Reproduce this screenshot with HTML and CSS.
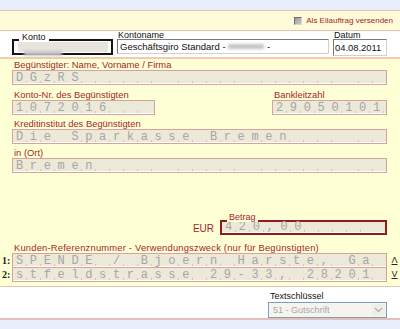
FILE: index.html
```html
<!DOCTYPE html>
<html lang="de">
<head>
    <meta charset="UTF-8">
    <meta name="viewport" content="width=device-width, initial-scale=1.0">
    <title>Überweisung</title>

    <link rel="stylesheet" href="styles.css">
</head>
<body>

    <div class="strip"></div>

    <!-- Eilauftrag -->
    <div class="eil">
        <span class="check"></span>
        <span class="eil-text">Als Eilauftrag versenden</span>
    </div>

    <!-- Auftraggeber -->
    <div class="account">
        <div class="konto">
            <span class="konto-label">Konto</span>
            <div class="konto-field"><span class="blur blur-konto"></span></div>
        </div>
        <div class="kname">
            <div class="plain-label">Kontoname</div>
            <div class="plain-input">Geschäftsgiro Standard - <span class="blur blur-name"></span> -</div>
        </div>
        <div class="datum">
            <div class="plain-label">Datum</div>
            <div class="plain-input date-input">04.08.2011</div>
        </div>
    </div>

    <!-- Formular -->
    <div class="main">
        <div class="lbl">Begünstigter: Name, Vorname / Firma</div>
        <div class="comb">DGzRS</div>

        <div class="pair">
            <div class="konto-nr">
                <div class="lbl">Konto-Nr. des Begünstigten</div>
                <div class="comb">1072016</div>
            </div>
            <div class="blz">
                <div class="lbl">Bankleitzahl</div>
                <div class="comb">29050101</div>
            </div>
        </div>

        <div class="lbl spaced">Kreditinstitut des Begünstigten</div>
        <div class="comb">Die Sparkasse Bremen</div>

        <div class="lbl spaced">in (Ort)</div>
        <div class="comb">Bremen</div>

        <div class="betrag-row">
            <span class="eur">EUR</span>
            <div class="betrag">
                <span class="betrag-label">Betrag</span>
                <div class="comb comb-bare">420,00</div>
            </div>
        </div>

        <div class="lbl kunden">Kunden-Referenznummer - Verwendungszweck (nur für Begünstigten)</div>
        <div class="ref-row">
            <span class="num">1:</span>
            <div class="comb">SPENDE / Bjoern Harste, Ga</div>
            <span class="scroll">Λ</span>
        </div>
        <div class="ref-row second">
            <span class="num">2:</span>
            <div class="comb">stfeldstrasse 29-33, 28201</div>
            <span class="scroll">V</span>
        </div>
    </div>

    <!-- Textschlüssel -->
    <div class="footer">
        <div class="ts-label">Textschlüssel</div>
        <div class="select">
            <span class="select-text">51 - Gutschrift</span>
            <span class="select-btn">
                <svg width="9" height="6" viewBox="0 0 9 6"><polyline points="1,1 4.5,4.5 8,1" fill="none" stroke="#b4b4b4" stroke-width="1.4"/></svg>
            </span>
        </div>
    </div>

    <div class="strip strip-bottom"></div>

</body>
</html>
```

FILE: styles.css
```css
body {
    margin: 0;
    width: 400px;
    height: 329px;
    overflow: hidden;
    font-family: "Liberation Sans", Arial, sans-serif;
    background-color: #ffffff;
}

.strip {
    height: 10px;
    background-color: #e8eefa;
    border-bottom: 1px solid #e6c0b6;
}

.strip-bottom {
    height: 9px;
    border-bottom: none;
}

/* Eilauftrag */
.eil {
    height: 19px;
    background-color: #fffbd9;
    border-bottom: 1px solid #e6c0b6;
    display: flex;
    justify-content: flex-end;
    align-items: center;
    gap: 4px;
    padding-right: 7px;
}

.check {
    width: 8px;
    height: 8px;
    box-sizing: border-box;
    border: 1px solid;
    border-color: #6e6e6e #d8d8d8 #d8d8d8 #6e6e6e;
    background: linear-gradient(135deg, #9c9c9c, #c8c8c8);
}

.eil-text {
    font-size: 8px;
    color: #a3262a;
}

/* Auftraggeber */
.account {
    height: 26px;
    border-bottom: 2px solid #f2cbb0;
    display: flex;
    padding-left: 12px;
}

.konto {
    margin-top: 8px;
    width: 101px;
    height: 16px;
    box-sizing: border-box;
    border: 2px solid #151515;
    position: relative;
}

.konto-label {
    position: absolute;
    top: -8px;
    left: 5px;
    padding: 0 3px;
    background-color: #ffffff;
    font-size: 9px;
    line-height: 9px;
    color: #111111;
}

.konto-field {
    margin: 1px 3px 0 4px;
    height: 10px;
    background-color: #e6e4dc;
}

.blur {
    display: inline-block;
    background-color: #c4c4c8;
    filter: blur(1.5px);
}

.blur-konto {
    width: 38px;
    height: 5px;
    margin: 3px 0 0 6px;
}

.blur-name {
    width: 36px;
    height: 5px;
    vertical-align: 1px;
}

.kname {
    margin-left: 4px;
    width: 212px;
}

.datum {
    margin-left: 4px;
    width: 54px;
}

.plain-label {
    font-size: 9px;
    line-height: 8px;
    height: 8px;
    padding-left: 1px;
    color: #111111;
}

.plain-input {
    height: 15px;
    box-sizing: border-box;
    border: 1px solid;
    border-color: #7a7a7a #d4d0c8 #d4d0c8 #7a7a7a;
    background-color: #ffffff;
    padding-left: 2px;
    font-size: 9.5px;
    line-height: 13px;
    color: #111111;
    white-space: nowrap;
    overflow: hidden;
}

.date-input {
    height: 17px;
    padding-left: 1px;
    font-size: 9.4px;
    line-height: 15px;
}

/* Formular */
.main {
    height: 228px;
    box-sizing: border-box;
    background-color: #ffffd6;
    border-bottom: 1px solid #e6c0b6;
    padding: 1px 13px 0 12px;
}

.lbl {
    font-size: 9.4px;
    line-height: 10px;
    height: 10px;
    padding-left: 2px;
    color: #a3262a;
    white-space: nowrap;
}

.spaced {
    margin-top: 4px;
}

.comb {
    height: 15px;
    box-sizing: border-box;
    border: 1px solid #d9a29e;
    padding-left: 3px;
    font-family: "Liberation Mono", "Courier New", monospace;
    font-size: 12px;
    line-height: 14px;
    letter-spacing: 6.65px;
    color: #a6a6a6;
    white-space: pre;
    overflow: hidden;
    background:
        linear-gradient(#ffffff, #ffffff) left bottom / 100% 1px no-repeat,
        repeating-linear-gradient(90deg, transparent 0 13px, #e3bcb8 13px 13.85px) left bottom / 100% 3px no-repeat,
        #ece9d8;
}

.pair {
    display: flex;
    justify-content: space-between;
    margin-top: 5px;
}

.konto-nr {
    width: 143px;
}

.blz {
    width: 115px;
}

.betrag-row {
    display: flex;
    justify-content: flex-end;
    align-items: center;
    margin-top: 47px;
}

.eur {
    font-size: 10px;
    color: #a3262a;
    margin-right: 6px;
    padding-top: 2px;
}

.betrag {
    width: 167px;
    height: 15px;
    box-sizing: border-box;
    border: 2px solid #8e1b1e;
    position: relative;
}

.betrag-label {
    position: absolute;
    top: -9px;
    left: 5px;
    padding: 0 2px;
    background-color: #ffffd6;
    font-size: 9px;
    line-height: 8px;
    height: 9px;
    color: #a3262a;
}

.comb-bare {
    height: 11px;
    border: none;
    line-height: 11px;
    overflow: visible;
}

.kunden {
    margin-top: 8px;
    letter-spacing: 0.2px;
}

.ref-row {
    display: flex;
    margin: 0 -13px 0 -12px;
    height: 15px;
}

.ref-row .comb {
    flex: 1;
}

.second {
    margin-top: -1px;
}

.num {
    width: 12px;
    box-sizing: border-box;
    padding-left: 2px;
    font-family: "Liberation Serif", "Times New Roman", serif;
    font-weight: bold;
    font-size: 10px;
    line-height: 16px;
    color: #222222;
}

.scroll {
    width: 13px;
    text-align: center;
    font-size: 9px;
    line-height: 14px;
    color: #222222;
    text-decoration: underline;
    padding-left: 2px;
    box-sizing: border-box;
}

/* Textschlüssel */
.footer {
    height: 27px;
    padding: 4px 13px 0 0;
    border-bottom: 2px solid #e6c0b6;
    display: flex;
    flex-direction: column;
    align-items: flex-end;
}

.ts-label {
    width: 119px;
    box-sizing: border-box;
    padding-left: 2px;
    font-size: 9px;
    line-height: 10px;
    color: #111111;
}

.select {
    margin-top: 1px;
    width: 119px;
    height: 16px;
    box-sizing: border-box;
    border: 1px solid #7f9db9;
    background-color: #f5f4ee;
    display: flex;
    align-items: center;
    justify-content: space-between;
}

.select-text {
    padding-left: 4px;
    font-size: 9px;
    color: #a8a8a8;
}

.select-btn {
    width: 13px;
    height: 12px;
    margin-right: 1px;
    background-color: #efeee8;
    display: flex;
    align-items: center;
    justify-content: center;
}
```
